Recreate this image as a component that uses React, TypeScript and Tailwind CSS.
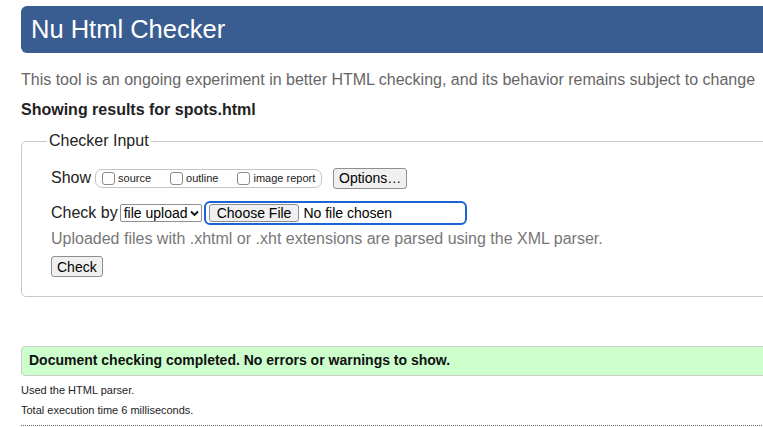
import React from "react";

const Box: React.FC<{ label: string }> = ({ label }) => (
  <span className="flex items-center gap-[3px]">
    <span className="inline-block w-[13px] h-[13px] rounded-[3px] border border-[#8a8a8a] bg-white" />
    <span className="text-[11px] text-[#222]">{label}</span>
  </span>
);

const App: React.FC = () => {
  return (
    <div className="w-[763px] h-[427px] overflow-hidden bg-white font-['Liberation_Sans',Arial,sans-serif] text-black">
      <div className="pl-[21px] w-[800px]">
        {/* header */}
        <div className="mt-[6px] h-[47px] bg-[#3a5d91] rounded-l-[6px] pl-[10px] flex items-center">
          <h1 className="text-[25.5px] text-white leading-none">Nu Html Checker</h1>
        </div>

        <p className="mt-[18px] text-[16px] leading-[18px] text-[#666]">
          This tool is an ongoing experiment in better HTML checking, and its behavior remains subject to change
        </p>

        <p className="mt-[12px] text-[16px] leading-[18px] font-bold text-[#222]">Showing results for spots.html</p>

        <fieldset className="mt-[13px] border border-[#c8c8c8] rounded-[5px] pl-[29px] pb-[17px]">
          <legend className="-ml-[4px] px-[2px] text-[16px] leading-[18px] text-[#222]">Checker Input</legend>

          <div className="mt-[17px] flex items-center h-[22px]">
            <span className="text-[16px] text-[#222]">Show</span>
            <div className="ml-[4px] h-[19px] w-[227px] border border-[#c4c4c4] rounded-[7px] flex items-center pl-[6px] gap-[19px]">
              <Box label="source" />
              <Box label="outline" />
              <Box label="image report" />
            </div>
            <button className="ml-[11px] h-[21px] px-[5px] border border-[#8f8f8f] rounded-[3px] bg-[#f0f0f0] text-[14px] leading-none text-black">
              Options…
            </button>
          </div>

          <div className="mt-[12px] flex items-center h-[24px]">
            <span className="text-[16px] text-[#222]">Check by</span>
            <div className="ml-[2px] h-[18px] w-[82px] border border-[#8f8f8f] rounded-[2px] bg-white flex items-center justify-between pl-[3px] pr-[2px]">
              <span className="text-[14px] leading-none">file upload</span>
              <svg width="9" height="7" viewBox="0 0 9 7" fill="none">
                <path d="M1 1.5 L4.5 5 L8 1.5" stroke="#111" strokeWidth="1.8" />
              </svg>
            </div>
            <div className="ml-[2px] h-[24px] w-[263px] border-2 border-[#1d63d4] rounded-[6px] flex items-center pl-[3px]">
              <button className="h-[18px] px-[7px] border border-[#8f8f8f] rounded-[3px] bg-[#f0f0f0] text-[14px] leading-none">
                Choose File
              </button>
              <span className="ml-[4px] text-[14px]">No file chosen</span>
            </div>
          </div>

          <p className="mt-[5px] text-[16px] leading-[18px] text-[#777]">
            Uploaded files with .xhtml or .xht extensions are parsed using the XML parser.
          </p>

          <button className="mt-[8px] h-[21px] px-[5px] border border-[#8f8f8f] rounded-[3px] bg-[#f0f0f0] text-[14px] leading-none">
            Check
          </button>
        </fieldset>

        <div className="mt-[49px] h-[30px] bg-[#ccffcc] border border-[#cccccc] rounded-l-[4px] pl-[7px] flex items-center">
          <span className="text-[14px] font-bold text-[#111]">Document checking completed. No errors or warnings to show.</span>
        </div>

        <p className="mt-[8px] text-[11px] leading-[13px] text-[#222]">Used the HTML parser.</p>
        <p className="mt-[7px] text-[11px] leading-[13px] text-[#222]">Total execution time 6 milliseconds.</p>
        <div className="mt-[8px] border-t border-dotted border-[#666]" />
      </div>
    </div>
  );
};

export default App;
